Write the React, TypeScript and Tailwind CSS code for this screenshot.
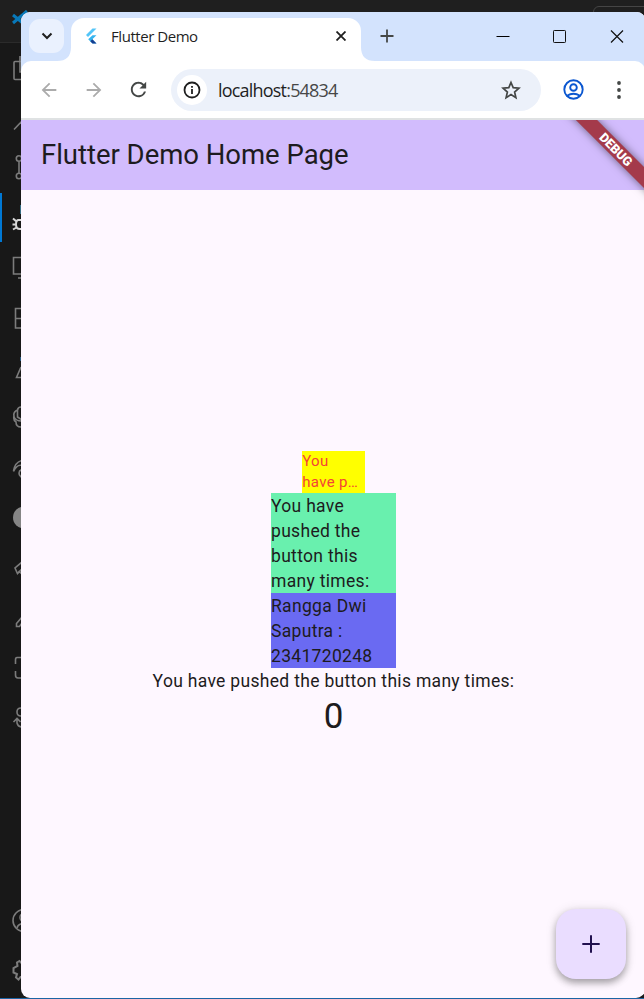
import React from "react";
import { MdArrowBack, MdArrowForward, MdRefresh } from "react-icons/md";

const stroke = { fill: "none", stroke: "#7c7c7c", strokeWidth: 1.6 };

// Activity bar glyphs; each one is drawn in a 21 x 50 slot, cut off by the browser window.
const upperGlyphs: React.ReactNode[] = [
  <path key="files" d="M22 16.500H15q-1 0-1 1V33.500q0 1 1 1H22M20 11V27H22" {...stroke} />,
  <path key="search" d="M14 34.500 22 26" {...stroke} />,
  <g key="git" {...stroke}>
    <circle cx="19" cy="13.500" r="2.700" />
    <circle cx="19" cy="31" r="2.700" />
    <path d="M19 16.500V28" />
  </g>,
  <g key="debug" {...stroke} stroke="#d7d7d7" strokeWidth="2">
    <path d="M22 25H18.500Q16 25 16 29.500Q16 34 20 34H22M13 23.500 16.500 26.500M12.500 29.500H16M13 34.500 16.500 32.500" />
    <path d="M20.500 10V19" stroke="#356b82" strokeWidth="1" />
  </g>,
  <path key="remote" d="M22 12.500H13.500V29H22M18 33H22" {...stroke} />,
  <path key="extensions" d="M22 13.500H15.500V33H22M15.500 23.500H22" {...stroke} />,
  <g key="flask">
    <path d="M21 22 16.500 32.500H22" {...stroke} />
    <path d="M20.500 12V16" stroke="#28577c" />
  </g>,
  <path key="chat" d="M21 12Q18 12 17.500 15Q13 17 14 21Q13 25 16 27Q16 32 21 32M17.500 15V22L22 25M14 22Q16 26 21 26" {...stroke} />,
  <path key="wave" d="M13.500 26Q15 17 22 15.500M13.500 26.500Q17 19 22 20.500M22 24.500Q18 26 19.500 30L22 33" {...stroke} />,
  <circle key="avatar" cx="24" cy="22.500" r="11" fill="#858585" />,
  <path key="tag" d="M22 17 15 23 17.500 28.500 22 24M18.500 26 22 29" {...stroke} />,
  <path key="pen" d="M22 22 16.500 28.500V31.500H19.500L22 28" {...stroke} />,
  <path key="scan" d="M22 12.500H17Q15.500 12.500 15.500 15V19M15.500 26V30Q15.500 33 18 33H22" {...stroke} />,
  <path key="hook" d="M21 13Q17 13 17 17Q17 21 21 21M13.500 27 17 23.500 20.500 27M17 23.500V28Q18 32 22 32" {...stroke} />,
];

function Slot({ children }: { children: React.ReactNode }) {
  return (
    <svg className="h-[50px] w-[21px] shrink-0" viewBox="0 0 21 50">
      {children}
    </svg>
  );
}

function ActivityBar() {
  return (
    <aside className="relative flex w-[21px] shrink-0 flex-col justify-between bg-[#181818] pb-[3px] pt-[33px]">
      <div className="absolute left-0 top-0 h-[31px] w-full border-b border-[#2b2b2b] bg-[#1f1f1f]" />
      <svg className="absolute -top-[2px] left-[12px] h-[17px] w-[18px]" viewBox="0 0 18 17" fill="none" stroke="#0878b9" strokeWidth="3">
        <path d="M1 5 12 14M1 13 15 1" />
      </svg>
      <div className="absolute left-0 top-[181px] h-[49px] w-[2px] bg-[#0078d4]" />
      <div className="flex flex-col">
        {upperGlyphs.map((g, i) => (
          <Slot key={i}>{g}</Slot>
        ))}
      </div>
      <div className="flex flex-col">
        <Slot>
          <g {...stroke}>
            <circle cx="24" cy="25.500" r="11" />
            <circle cx="24" cy="22.500" r="4" />
            <path d="M17 33Q18 28.500 24 28.500" />
          </g>
        </Slot>
        <Slot>
          <path
            d="M22 18.500 19.500 16 17 17.500 17.500 21 13.500 23V27.500L17 29 16 32.500 18.500 34.500 20.500 32H22"
            {...stroke}
            strokeWidth="2"
          />
        </Slot>
      </div>
    </aside>
  );
}

function FlutterLogo() {
  return (
    <svg className="h-[16px] w-[12px]" viewBox="0 0 12 16">
      <path d="M7.500.500H11.500L3 9 1 7Z" fill="#54c5f8" />
      <path d="M7.500 7.200H11.500L7.300 11.300 11.500 15.500H7.500L3.200 11.300Z" fill="#35b4ef" />
      <path d="M5.300 13.300 7.300 11.300 11.500 15.500H7.500Z" fill="#163d8f" />
    </svg>
  );
}

function TabStrip() {
  return (
    <div className="flex h-[49px] rounded-tl-[9px] rounded-tr-[8px] bg-[#d3e3fd] pl-[8px] pt-[6px]">
      <button className="mt-[1px] flex h-[34px] w-[35px] items-center justify-center rounded-[11px] bg-[#eaf1fe]">
        <svg className="h-[8px] w-[12px]" viewBox="0 0 12 8" fill="none" stroke="#1f1f1f" strokeWidth="2">
          <path d="M1.500 1.500 6 6 10.500 1.500" />
        </svg>
      </button>
      <div className="relative ml-[7px] flex w-[290px] items-center rounded-t-[13px] bg-white pb-[7px] pl-[14px] pr-[15px]">
        <svg className="absolute -left-[14px] bottom-0 h-[14px] w-[14px]" viewBox="0 0 14 14">
          <path d="M14 0V14H0Q14 14 14 0Z" fill="#fff" />
        </svg>
        <svg className="absolute -right-[14px] bottom-0 h-[14px] w-[14px]" viewBox="0 0 14 14">
          <path d="M0 0V14H14Q0 14 0 0Z" fill="#fff" />
        </svg>
        <FlutterLogo />
        <span className="ml-[14px] grow whitespace-nowrap font-['Open_Sans',sans-serif] text-[15px] tracking-[-0.45px] text-[#1f1f1f]">
          Flutter Demo
        </span>
        <svg className="h-[10px] w-[10px]" viewBox="0 0 10 10" stroke="#1f1f1f" strokeWidth="1.800">
          <path d="M.500.500 9.500 9.500M9.500.500.500 9.500" />
        </svg>
      </div>
      <svg className="ml-[19px] mt-[11px] h-[14px] w-[14px]" viewBox="0 0 14 14" stroke="#444746" strokeWidth="1.800">
        <path d="M7 .500V13.500M.500 7H13.500" />
      </svg>
      <div className="ml-auto mr-[21px] mt-[11px] flex gap-[43px]">
        <svg className="h-[14px] w-[14px]" viewBox="0 0 14 14" stroke="#000">
          <path d="M.500 7.500H13.500" />
        </svg>
        <svg className="h-[14px] w-[14px]" viewBox="0 0 14 14" fill="none" stroke="#111">
          <rect x=".5" y="1.500" width="12" height="12" rx=".8" />
        </svg>
        <svg className="h-[14px] w-[14px]" viewBox="0 0 14 14" stroke="#111" strokeWidth="1.200">
          <path d="M1 1.500 13 13.500M13 1.500 1 13.500" />
        </svg>
      </div>
    </div>
  );
}

function Toolbar() {
  return (
    <div className="bg-[#d3e3fd]">
      <div className="flex h-[59px] items-center rounded-t-[10px] border-b-2 border-[#dfe2e3] bg-white pl-[17px] pr-[15px]">
        <MdArrowBack className="h-[22px] w-[22px] text-[#ababab]" />
        <MdArrowForward className="ml-[23px] h-[22px] w-[22px] text-[#ababab]" />
        <MdRefresh className="ml-[22px] h-[23px] w-[23px] text-[#444746]" />
        <div className="ml-[21px] flex h-[42px] w-[370px] items-center rounded-full bg-[#ecf1fa] pl-[6px] pr-[20px]">
          <span className="flex h-[30px] w-[30px] items-center justify-center rounded-full bg-white">
            <svg className="h-[18px] w-[18px]" viewBox="0 0 18 18" fill="none" stroke="#1f1f1f" strokeWidth="1.800">
              <circle cx="9" cy="9" r="7.500" />
              <path d="M9 8V13M9 5V6.700" />
            </svg>
          </span>
          <span className="ml-[11px] grow pt-[2px] font-['Open_Sans',sans-serif] text-[18px] tracking-[-0.8px] text-[#1f1f1f]">
            localhost<span className="text-[#474747]">:54834</span>
          </span>
          <svg className="h-[20px] w-[20px]" viewBox="0 0 20 20" fill="none" stroke="#444746" strokeWidth="1.700">
            <path d="M10 2.500 12.200 7.700 17.900 8.200 13.600 12 14.900 17.600 10 14.600 5.100 17.600 6.400 12 2.100 8.200 7.800 7.700Z" />
          </svg>
        </div>
        <svg className="ml-[22px] h-[21px] w-[21px]" viewBox="0 0 21 21" fill="none" stroke="#0b57d0" strokeWidth="1.900">
          <circle cx="10.500" cy="10.500" r="9.200" />
          <circle cx="10.500" cy="8.500" r="3.300" />
          <path d="M4 16.700Q10.500 12.800 17 16.700" />
        </svg>
        <svg className="ml-auto mr-[9px] h-[20px] w-[4px]" viewBox="0 0 4 20" fill="#444746">
          <circle cx="2" cy="3" r="1.900" />
          <circle cx="2" cy="10" r="1.900" />
          <circle cx="2" cy="17" r="1.900" />
        </svg>
      </div>
    </div>
  );
}

export default function App() {
  return (
    <div className="flex h-[999px] w-[644px] flex-col overflow-hidden bg-[#1b1b1b] font-[Roboto,sans-serif]">
      <header className="relative h-[12px] shrink-0 bg-[#1f1f1f]">
        <div className="absolute left-[593px] top-[6px] h-[20px] w-[60px] rounded-[6px] border border-[#454545]" />
      </header>
      <div className="flex h-[986px] shrink-0">
        <ActivityBar />
        <main className="relative flex w-[624px] shrink-0 flex-col overflow-hidden rounded-b-[9px] rounded-tl-[9px] rounded-tr-[8px] bg-[#fef7ff]">
          <TabStrip />
          <Toolbar />
          <section className="relative flex grow flex-col overflow-hidden">
            <h1 className="flex h-[70px] shrink-0 items-center bg-[#d2bcfd] pl-[20px] text-[27.5px] tracking-[-0.02px] text-[#1d1b20]">
              Flutter Demo Home Page
            </h1>
            <div className="absolute left-[520px] top-[22px] flex h-[15px] w-[150px] rotate-45 items-center justify-center bg-[#a43a4b] text-[12.75px] font-black leading-[15px] text-white shadow-[0_0_8px_rgba(0,0,0,0.5)]">
              DEBUG
            </div>
            <div className="flex grow flex-col items-center justify-center pl-px pt-px text-[17.5px] leading-[25px] tracking-[0.3125px] text-[#1d1b20]">
              <p className="h-[42.8px] w-[62.5px] whitespace-nowrap bg-[#ff0] pt-[0.6px] text-[15px] leading-[21.2px] text-[#f44336]">
                You
                <br />
                have p…
              </p>
              <p className="h-[100px] w-[125px] bg-[#69f0ae] pt-[0.6px]">
                You have pushed the button this many times:
              </p>
              <p className="h-[75px] w-[125px] bg-[#6a6af2] pt-[0.6px]">Rangga Dwi Saputra : 2341720248</p>
              <p className="h-[25px] pt-[0.6px]">You have pushed the button this many times:</p>
              <p className="h-[45px] pt-[0.6px] text-[35px] leading-[45px] tracking-normal">0</p>
            </div>
            <button className="absolute bottom-[19px] right-[19px] flex h-[70px] w-[70px] items-center justify-center rounded-[20px] bg-[#eaddff] shadow-[0_4px_7px_rgba(0,0,0,0.3),0_1px_12px_rgba(0,0,0,0.12)]">
              <svg className="h-[18px] w-[18px]" viewBox="0 0 18 18" stroke="#21104f" strokeWidth="2">
                <path d="M9 .3V17.700M.3 9H17.700" />
              </svg>
            </button>
          </section>
        </main>
      </div>
      <footer className="h-px shrink-0 bg-[#1b65a5]" />
    </div>
  );
}
